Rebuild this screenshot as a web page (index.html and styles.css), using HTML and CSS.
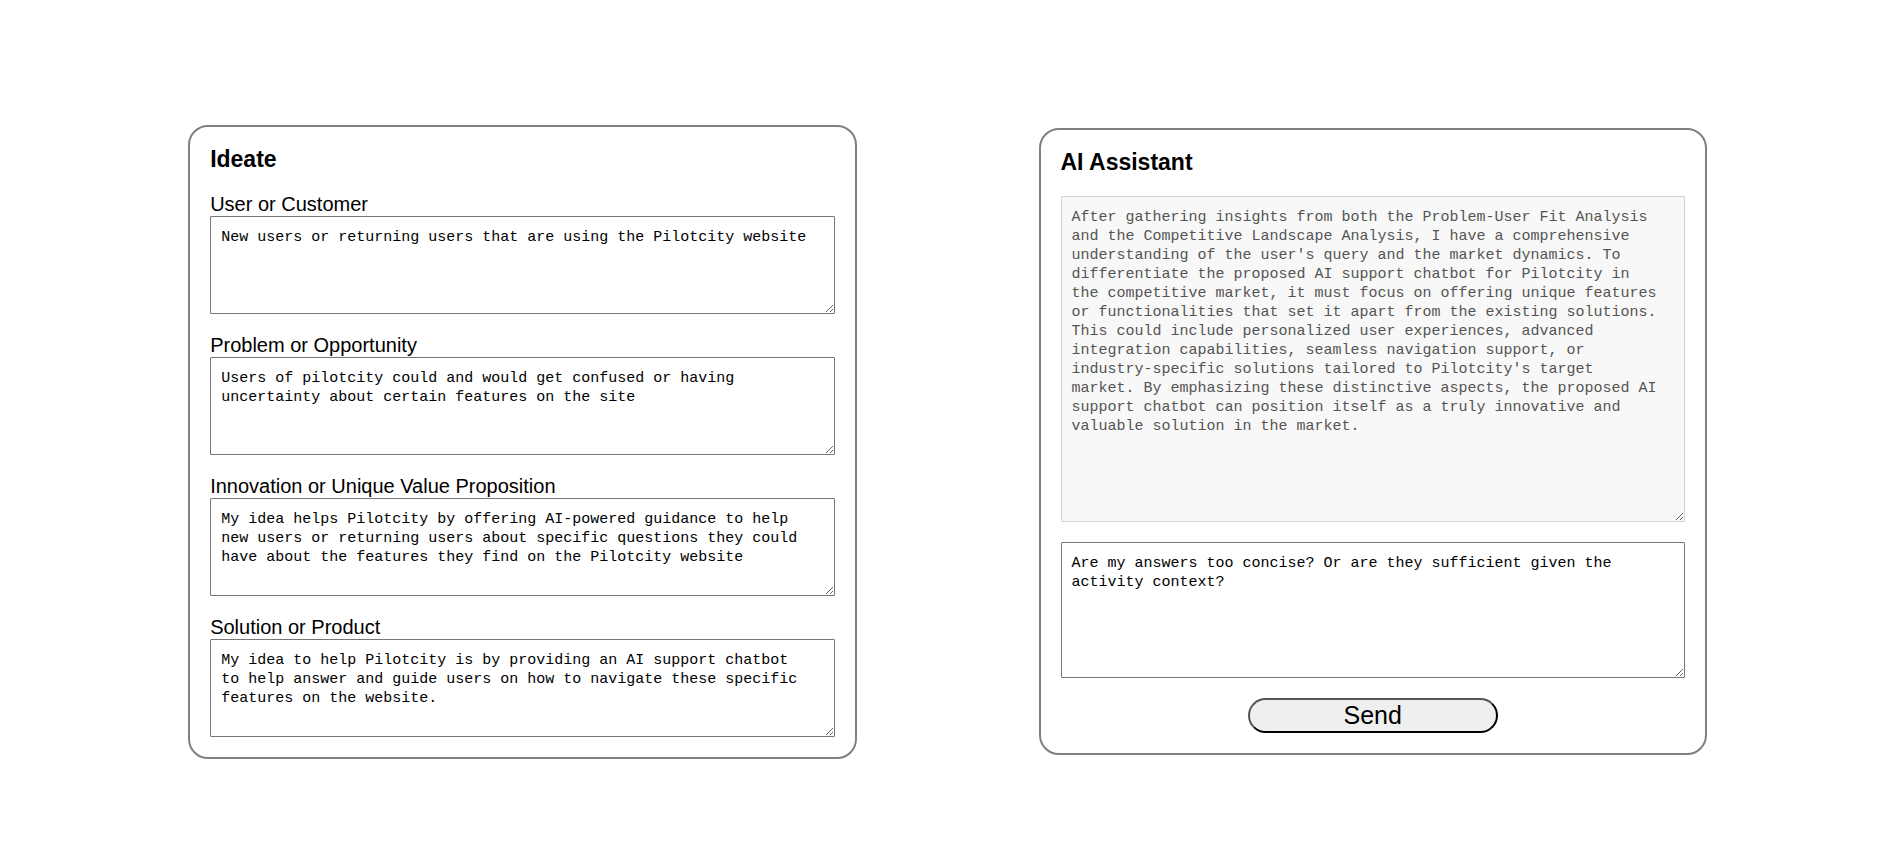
FILE: index.html
```html
<!DOCTYPE html>
<html lang="en">
<head>
<meta charset="utf-8">
<title>Ideate</title>
<link rel="stylesheet" href="styles.css">
</head>
<body>
<main class="workspace">
<section class="card">
<h3 class="card-title">Ideate</h3>
<div class="fields">
<div class="field">
<label for="user">User or Customer</label>
<textarea id="user" class="answer" spellcheck="false">New users or returning users that are using the Pilotcity website</textarea>
</div>
<div class="field">
<label for="problem">Problem or Opportunity</label>
<textarea id="problem" class="answer" spellcheck="false">Users of pilotcity could and would get confused or having uncertainty about certain features on the site</textarea>
</div>
<div class="field">
<label for="innovation">Innovation or Unique Value Proposition</label>
<textarea id="innovation" class="answer" spellcheck="false">My idea helps Pilotcity by offering AI-powered guidance to help new users or returning users about specific questions they could have about the features they find on the Pilotcity website</textarea>
</div>
<div class="field">
<label for="solution">Solution or Product</label>
<textarea id="solution" class="answer" spellcheck="false">My idea to help Pilotcity is by providing an AI support chatbot to help answer and guide users on how to navigate these specific features on the website.</textarea>
</div>
</div>
</section>
<section class="card">
<h3 class="card-title">AI Assistant</h3>
<form class="fields">
<textarea class="response" aria-label="Assistant response" disabled>After gathering insights from both the Problem-User Fit Analysis and the Competitive Landscape Analysis, I have a comprehensive understanding of the user's query and the market dynamics. To differentiate the proposed AI support chatbot for Pilotcity in the competitive market, it must focus on offering unique features or functionalities that set it apart from the existing solutions. This could include personalized user experiences, advanced integration capabilities, seamless navigation support, or industry-specific solutions tailored to Pilotcity's target market. By emphasizing these distinctive aspects, the proposed AI support chatbot can position itself as a truly innovative and valuable solution in the market.</textarea>
<textarea class="message" aria-label="Your message" spellcheck="false">Are my answers too concise? Or are they sufficient given the activity context?</textarea>
<button class="send" type="button">Send</button>
</form>
</section>
</main>
</body>
</html>
```
FILE: styles.css
```css
* {
  box-sizing: border-box;
}

body {
  margin: 0;
  background: #fff;
  color: #000;
  font-family: "Liberation Sans", Arial, sans-serif;
  font-size: 20px;
  line-height: 23px;
}

.workspace {
  display: flex;
  justify-content: center;
  align-items: center;
  gap: 182px;
  min-height: 100vh;
  padding: 25px 0 0 3px;
}

.card {
  box-sizing: content-box;
  width: 33vw;
  padding: 20px;
  border: 2px solid #808080;
  border-radius: 20px;
}

.card-title {
  margin: 0 0 22px;
  font-size: 23px;
  line-height: 24px;
}

.fields {
  display: flex;
  flex-direction: column;
  gap: 20px;
}

.field {
  display: flex;
  flex-direction: column;
}

textarea {
  display: block;
  width: 100%;
  margin: 0;
  padding: 11px 20px 10px 10px;
  border: 1px solid #767676;
  border-radius: 1px;
  background: #fff;
  color: #000;
  font-family: Consolas, "Liberation Mono", monospace;
  font-size: 15px;
  line-height: 19px;
  resize: both;
}

.answer {
  height: 98px;
}

.response {
  height: 326px;
}

.response:disabled {
  border-color: #d0d0d0;
  background: #f8f8f8;
  color: #545454;
}

.message {
  height: 136px;
}

.send {
  align-self: center;
  width: 40%;
  height: 35px;
  padding: 0;
  border: 2px outset #000;
  border-radius: 20px;
  background: #efefef;
  color: #000;
  font-family: inherit;
  font-size: 25px;
  line-height: 29px;
}
```
